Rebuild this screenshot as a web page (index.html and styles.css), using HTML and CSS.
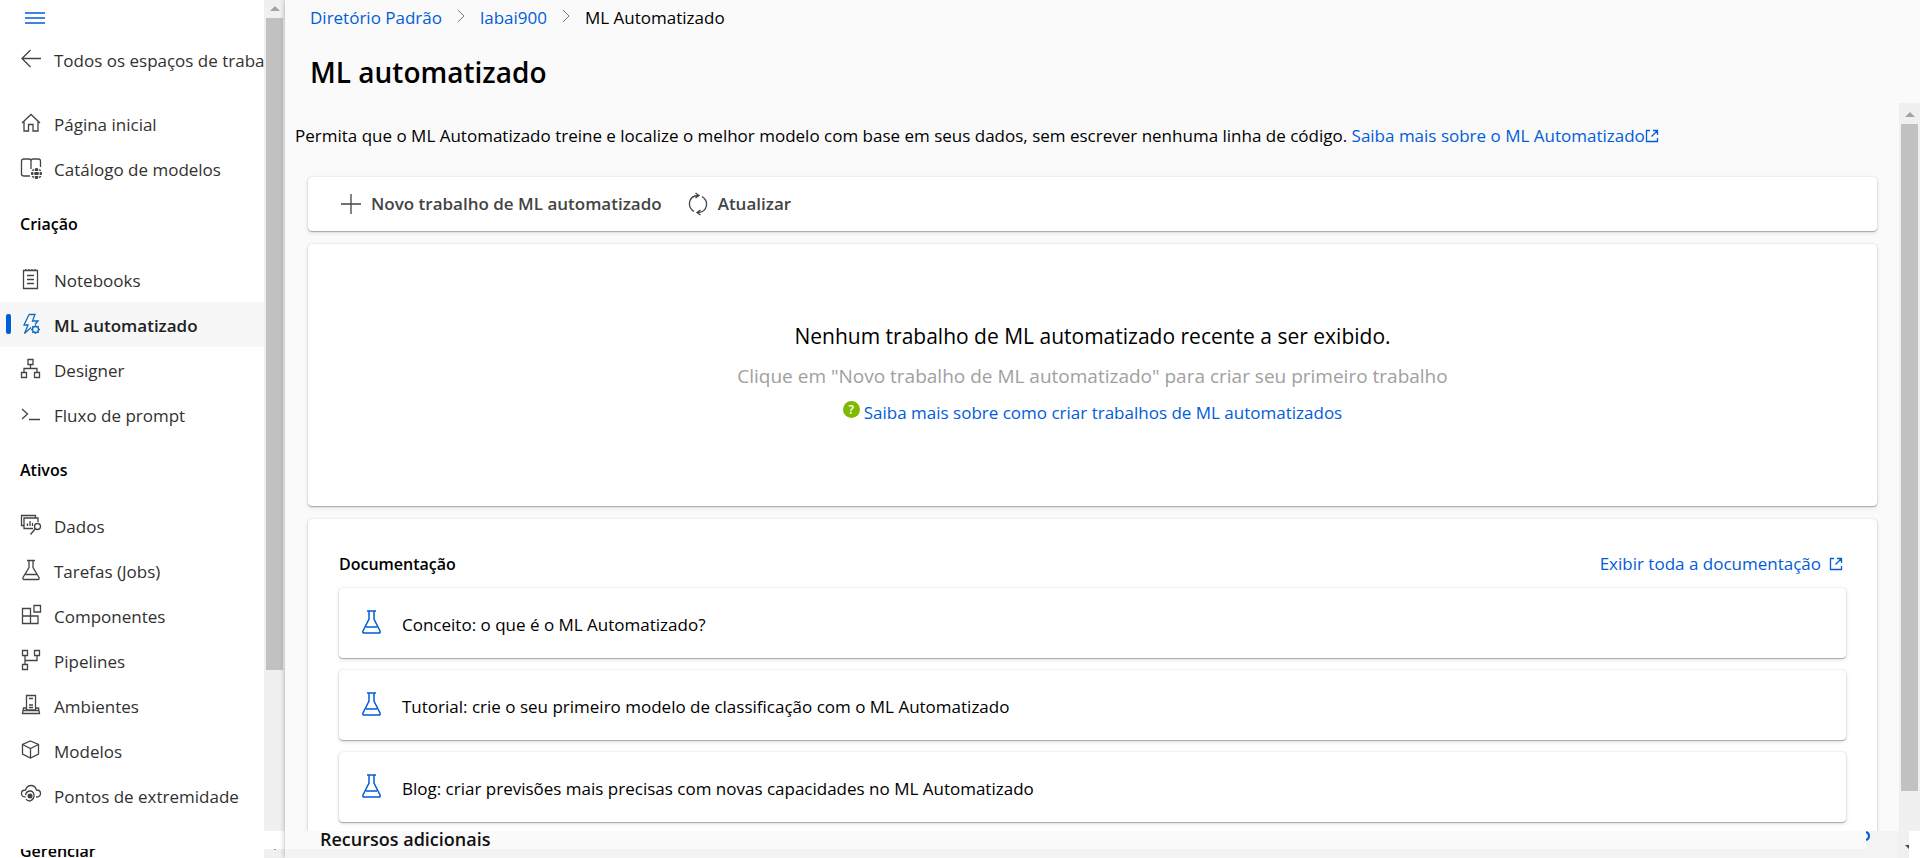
FILE: index.html
```html
<!DOCTYPE html>
<html lang="pt-BR">
<head>
<meta charset="utf-8">
<title>ML automatizado</title>
<link rel="stylesheet" href="styles.css">
</head>
<body>
<svg class="defs" aria-hidden="true">
  <symbol id="flask" viewBox="0 0 20 24"><path d="M5 1h9M7 1v8L1 21q-.6 2 1.200 2h14.600q1.800 0 1.200-2L12 9V1M4 17h11"/></symbol>
  <symbol id="external" viewBox="0 0 14 14"><path d="M5 1.500H1.500v11h11V9M8 1.500h4.500V6M12.500 1.500 6.500 7.500"/></symbol>
  <symbol id="chevron" viewBox="0 0 10 14"><path d="m2 1 6 6-6 6"/></symbol>
</svg>
<div class="app">
  <aside class="sidebar">
    <nav class="nav" aria-label="Navegação">
      <button class="menu" aria-label="Menu"><svg class="menu-icon" viewBox="0 0 20 12"><path d="M0 1h20M0 6h20M0 11h20"/></svg></button>
      <a class="item back" href="#"><svg class="icon" viewBox="0 0 22 22"><path d="M10.500 2 2 10.500l8.500 8.500M2 10.500h19"/></svg><span>Todos os espaços de trabalho</span></a>
      <a class="item" href="#"><svg class="icon" viewBox="0 0 22 22"><path d="m2 11 9-8.500L20 11M4 9.500V19h4.500v-6.500h4.500V19H18V9.500"/></svg><span>Página inicial</span></a>
      <a class="item" href="#"><svg class="icon" viewBox="0 0 22 22"><path d="M10 19H4q-2.500 0-2.500-2V4q0-2 2.500-2h5q2 0 2 2v8M11 4q0-2 2-2h5q2.500 0 2.500 2v6"/><circle class="solid" cx="16.500" cy="16.500" r="5.500"/><path class="cut" d="M11 14.500h11M11 18.500h11M14.500 11q-1.500 5.500 0 11M18.500 11q1.500 5.500 0 11"/></svg><span>Catálogo de modelos</span></a>
      <h2 class="group">Criação</h2>
      <a class="item" href="#"><svg class="icon" viewBox="0 0 22 22"><path d="M3.500 2.500h14v18h-14zM6 1v2M9 1v2M12 1v2M15 1v2M7 7.500h7M7 11.500h7M7 15.500h7"/></svg><span>Notebooks</span></a>
      <a class="item active" href="#" aria-current="page"><svg class="icon" viewBox="0 0 22 22"><path d="M9 1.500h6L12.500 8h5.500l-3 3.500M9 1.500 4 12h4L4.500 20.500l6.500-6"/><circle cx="15.500" cy="16.500" r="3"/><path d="M15.500 12v1.500M15.500 19.500V21M11 16.500h1.500M18.500 16.500H20M12.300 13.300l1 1M17.700 18.700l1 1M12.300 19.700l1-1M17.700 14.300l1-1"/></svg><span>ML automatizado</span></a>
      <a class="item" href="#"><svg class="icon" viewBox="0 0 22 22"><path d="M8 1.500h5v5H8zM1.500 14.500h5v5h-5zM14.500 14.500h5v5h-5zM10.500 6.500v4M4 14v-3.500h13V14"/></svg><span>Designer</span></a>
      <a class="item" href="#"><svg class="icon" viewBox="0 0 22 22"><path d="m2 6 5.500 5L2 16M9 16.500h11"/></svg><span>Fluxo de prompt</span></a>
      <h2 class="group">Ativos</h2>
      <a class="item" href="#"><svg class="icon" viewBox="0 0 22 22"><path d="M4 11.500H1.500v-10h14V4M13 14.500H4V4h14v4M7.500 12V9.500M10 12V7M12.500 12V9M15.500 14.500 10.500 20.500"/><circle cx="17.500" cy="12.500" r="3"/></svg><span>Dados</span></a>
      <a class="item" href="#"><svg class="icon" viewBox="0 0 22 22"><path d="M7 1.500h8M9 1.500v7L3 18.500q-.5 2 1 2h14q1.500 0 1-2L13 8.500v-7M5.500 15.500h11"/></svg><span>Tarefas (Jobs)</span></a>
      <a class="item" href="#"><svg class="icon" viewBox="0 0 22 22"><path d="M2.500 4.500h8v15h-8zM2.500 12h15.500v7.500H2.500M14 1.500h6.500V8H14z"/></svg><span>Componentes</span></a>
      <a class="item" href="#"><svg class="icon" viewBox="0 0 22 22"><path d="M2.500 1.500h5v5h-5zM14.500 1.500h5v5h-5zM2.500 15.500h5v5h-5zM5 6.500v9M5 11.500h12v-5"/></svg><span>Pipelines</span></a>
      <a class="item" href="#"><svg class="icon" viewBox="0 0 22 22"><path d="M6.500 16V1.500h9V16zM9 4.500h4M9 11h4M9 13.500h4M6.500 14H3.500l-1 5.500h17l-1-5.500h-3M3 16.500h16"/></svg><span>Ambientes</span></a>
      <a class="item" href="#"><svg class="icon" viewBox="0 0 22 22"><path d="m10.500 2 8 3.500v9.500l-8 4-8-4V5.500zM2.500 5.500l8 4 8-4M10.500 9.500V19"/></svg><span>Modelos</span></a>
      <a class="item" href="#"><svg class="icon" viewBox="0 0 22 22"><path d="M5.500 13q-4 0-4-3.500T5.500 6Q7 1.500 11 1.500T16.500 6q4 0 4 3.500T16 13M5.500 11q1-4 4.500-4t4 4-4 6q-3 0-4-2"/><circle class="solid" cx="10" cy="12" r="2.500"/></svg><span>Pontos de extremidade</span></a>
      <h2 class="group">Gerenciar</h2>
    </nav>
    <div class="scrollbar side-scroll" aria-hidden="true"><i class="arrow"></i><i class="thumb"></i><i class="arrow down"></i></div>
    <div class="side-strip"></div>
  </aside>
  <main class="main">
    <header class="top">
      <nav class="crumbs" aria-label="Trilha">
        <a href="#">Diretório Padrão</a>
        <svg class="chevron"><use href="#chevron"/></svg>
        <a href="#">labai900</a>
        <svg class="chevron"><use href="#chevron"/></svg>
        <span>ML Automatizado</span>
      </nav>
      <h1 class="title">ML automatizado</h1>
    </header>
    <div class="body">
      <div class="content">
        <p class="intro">Permita que o ML Automatizado treine e localize o melhor modelo com base em seus dados, sem escrever nenhuma linha de código. <a href="#">Saiba mais sobre o ML Automatizado<svg class="external"><use href="#external"/></svg></a></p>
        <div class="panels">
          <div class="card toolbar">
            <button class="command"><svg class="tool-icon" viewBox="0 0 20 24"><path d="M10 2v20M0 12h20"/></svg>Novo trabalho de ML automatizado</button>
            <button class="command"><svg class="tool-icon" viewBox="0 0 20 24"><path d="M6 19.500C-1 15 0 4 10 3.500M14 4.500c7 4.500 6 15.500-4 16M7.500 1 11 3.500 7.500 6M12.500 18 9 20.500l3.500 2.500"/></svg>Atualizar</button>
          </div>
          <section class="card empty">
            <h2 class="empty-title">Nenhum trabalho de ML automatizado recente a ser exibido.</h2>
            <p class="empty-text">Clique em "Novo trabalho de ML automatizado" para criar seu primeiro trabalho</p>
            <a class="help" href="#"><span class="badge">?</span>Saiba mais sobre como criar trabalhos de ML automatizados</a>
          </section>
          <section class="card docs">
            <div class="docs-head">
              <h2 class="docs-title">Documentação</h2>
              <a class="docs-link" href="#">Exibir toda a documentação<svg class="external"><use href="#external"/></svg></a>
            </div>
            <a class="doc" href="#"><svg class="flask"><use href="#flask"/></svg>Conceito: o que é o ML Automatizado?</a>
            <a class="doc" href="#"><svg class="flask"><use href="#flask"/></svg>Tutorial: crie o seu primeiro modelo de classificação com o ML Automatizado</a>
            <a class="doc" href="#"><svg class="flask"><use href="#flask"/></svg>Blog: criar previsões mais precisas com novas capacidades no ML Automatizado</a>
          </section>
        </div>
      </div>
      <div class="scrollbar main-scroll" aria-hidden="true"><i class="arrow"></i><i class="thumb"></i></div>
    </div>
    <footer class="bottom">
      <h2 class="extra">Recursos adicionais</h2>
      <div class="corner"><svg class="curl" viewBox="0 0 4 10"><path d="M0 1q3 1 3 4T0 9"/></svg></div>
      <div class="track"><i class="arrow down"></i></div>
      <div class="blank"></div>
    </footer>
  </main>
</div>
</body>
</html>
```
FILE: styles.css
```css
* { box-sizing: border-box; }
body {
  margin: 0;
  overflow: hidden;
  background: #fff;
  color: #000;
  font: 17px/24px "Open Sans", "Noto Sans", sans-serif;
}
h1, h2, p { margin: 0; }
a { color: #015cda; text-decoration: none; }
button { border: 0; padding: 0; background: none; font: inherit; }
svg { flex: none; fill: none; stroke: currentColor; stroke-width: 1.3; }
.defs { position: absolute; width: 0; height: 0; }

.app {
  display: grid;
  grid-template: minmax(0, 1fr) / 285px minmax(0, 1fr);
  height: 100vh;
}

/* Sidebar */
.sidebar { position: relative; display: flex; overflow: hidden; }
.nav { flex: 1; min-width: 0; }
.menu { display: block; height: 37px; padding: 0 25px 2px; color: #015cda; }
.menu-icon { display: block; width: 20px; height: 12px; }
.item {
  display: flex;
  align-items: center;
  gap: 12px;
  height: 45px;
  padding: 2px 0 0 20px;
  color: #323130;
  white-space: nowrap;
  overflow: hidden;
}
.back { margin-bottom: 19px; }
.icon { width: 22px; height: 22px; color: #444; margin-bottom: 4px; }
.active { position: relative; background: #f7f7f7; color: #222; font-weight: 600; }
.active .icon { color: #0f6cbd; }
.active::before {
  content: "";
  position: absolute;
  left: 6px;
  top: 12px;
  width: 5px;
  height: 20px;
  border-radius: 2px;
  background: #015cda;
}
.solid { fill: currentColor; stroke: none; }
.cut { stroke: #fff; stroke-width: 1; }
.group { padding: 0 20px; font-size: 16px; font-weight: 600; line-height: 66px; height: 66px; }
.side-strip { position: absolute; left: 0; right: 0; bottom: 9px; height: 18px; background: #fff; }

.scrollbar {
  display: flex;
  flex-direction: column;
  align-items: center;
  flex: none;
  width: 21px;
  background: #f0f0f0;
}
.arrow {
  margin: 6px 0 7px;
  border: solid transparent;
  border-width: 0 5px 5px;
  border-bottom-color: #a3a3a3;
}
.down { border-width: 5px 5px 0; border-top-color: #444; }
.thumb { width: 17px; height: 76%; background: #c1c1c1; }
.side-scroll .down { margin: auto 0 8px; }
.main-scroll { padding-top: 3px; }
.main-scroll .thumb { height: 92%; }

/* Main area */
.main {
  display: flex;
  flex-direction: column;
  min-width: 0;
  background: #fafafa;
  box-shadow: 0 0 5px rgba(0, 0, 0, .3);
  z-index: 1;
}
.top { height: 103px; padding: 6px 25px 0; flex: none; }
.crumbs { display: flex; align-items: center; gap: 14px; }
.chevron { width: 10px; height: 14px; color: #777; margin-bottom: 4px; stroke-width: 1; }
.title { margin-top: 23px; font-size: 28px; font-weight: 600; line-height: 38px; }
.body { display: flex; flex: 1; min-height: 0; overflow: hidden; }
.content { flex: 1; min-width: 0; padding: 20px 22px 0 10px; }
.intro { line-height: 26px; white-space: nowrap; }
.external { width: 14px; height: 14px; }
.intro .external { vertical-align: -1px; }
.panels { display: flex; flex-direction: column; gap: 13px; margin-top: 28px; padding-left: 13px; }
.card, .doc {
  border-radius: 4px;
  background: #fff;
  box-shadow: 0 0 2px rgba(0, 0, 0, .16), 0 1px 1px rgba(0, 0, 0, .25), 0 2px 4px rgba(0, 0, 0, .1);
}
.toolbar { display: flex; align-items: center; gap: 26px; height: 54px; padding: 0 33px; }
.command { display: flex; align-items: center; gap: 10px; color: #444; font-weight: 600; }
.tool-icon { width: 20px; height: 24px; }
.empty { display: flex; flex-direction: column; align-items: center; height: 262px; padding-top: 77px; }
.empty-title { font-size: 21px; font-weight: 400; line-height: 30px; }
.empty-text { margin-top: 12px; color: #a0a0a0; font-size: 19px; line-height: 26px; }
.help { display: flex; gap: 4px; margin-top: 12px; }
.badge {
  width: 17px;
  height: 17px;
  border-radius: 50%;
  background: #7fba00;
  color: #fff;
  font-size: 12px;
  font-weight: 600;
  line-height: 17px;
  text-align: center;
}
.docs { display: flex; flex-direction: column; gap: 12px; padding: 33px 31px 20px; }
.docs-head { display: flex; justify-content: space-between; padding-right: 3px; }
.docs-title { font-size: 16px; font-weight: 600; line-height: 24px; }
.docs-link { display: flex; align-items: center; gap: 8px; }
.doc { display: flex; align-items: center; gap: 20px; height: 70px; padding: 3px 23px 0; color: #000; }
.flask { width: 20px; height: 24px; color: #015cda; margin-bottom: 6px; stroke-width: 1.5; }

/* Bottom strip */
.bottom { display: flex; flex: none; height: 27px; }
.extra {
  flex: 1;
  padding-left: 35px;
  border-bottom: 9px solid #f3f3f3;
  color: #111;
  font-size: 18px;
  font-weight: 600;
  line-height: 16px;
}
.corner { width: 33px; background: #f3f3f3; color: #015cda; }
.curl { display: block; width: 4px; height: 10px; stroke-width: 2; }
.track { width: 10px; padding: 14px 0 0 6px; overflow: hidden; background: #f0f0f0; }
.track .down { display: block; width: 10px; margin: 0; }
.blank { width: 11px; background: #fff; }
```
